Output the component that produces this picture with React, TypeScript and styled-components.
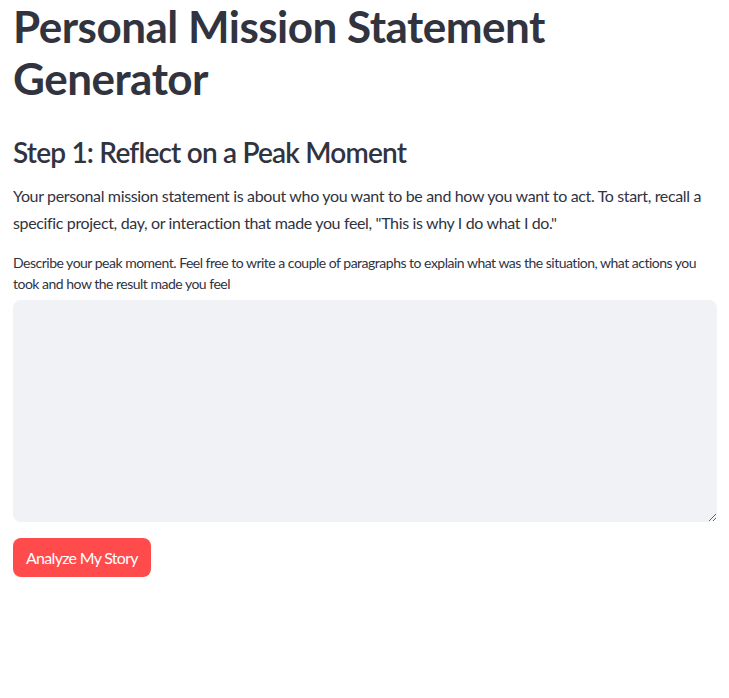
import React from 'react';
import styled, { createGlobalStyle } from 'styled-components';

const GlobalStyle = createGlobalStyle`
  html, body {
    margin: 0;
    padding: 0;
    background: #ffffff;
  }
  body {
    font-family: Lato, "Noto Sans", sans-serif;
    color: #31333f;
  }
`;

const Page = styled.main`
  padding: 0 12px 0 13px;
  display: flex;
  flex-direction: column;
`;

const Title = styled.h1`
  margin: 0;
  padding-top: 0;
  font-size: 44px;
  font-weight: 700;
  line-height: 52px;
  letter-spacing: -0.5px;
`;

const StepHeading = styled.h2`
  margin: 28px 0 0;
  font-size: 28px;
  font-weight: 600;
  line-height: 40px;
  letter-spacing: -0.8px;
`;

const Intro = styled.p`
  margin: 10px 0 0;
  font-size: 16px;
  line-height: 27px;
  letter-spacing: -0.35px;
`;

const Label = styled.label`
  display: block;
  margin-top: 16px;
  font-size: 14px;
  line-height: 21px;
  letter-spacing: -0.5px;
`;

const StoryInput = styled.textarea`
  display: block;
  box-sizing: border-box;
  margin-top: 6px;
  width: 100%;
  height: 222px;
  border: none;
  border-radius: 8px;
  background: #f0f2f6;
  padding: 12px 16px;
  font-family: inherit;
  font-size: 16px;
  color: #31333f;
  resize: vertical;
  outline: none;
`;

const Button = styled.button`
  align-self: flex-start;
  margin-top: 16px;
  height: 39px;
  padding: 0 13px;
  border: none;
  border-radius: 8px;
  background: #ff4b4b;
  color: #ffffff;
  font-family: inherit;
  font-size: 16px;
  line-height: 1;
  letter-spacing: -0.7px;
  cursor: pointer;
`;

export default function App() {
  return (
    <>
      <GlobalStyle />
      <Page>
        <Title>Personal Mission Statement Generator</Title>
        <StepHeading>Step 1: Reflect on a Peak Moment</StepHeading>
        <Intro>
          Your personal mission statement is about who you want to be and how you want to act. To
          start, recall a specific project, day, or interaction that made you feel, "This is why I
          do what I do."
        </Intro>
        <Label htmlFor="story">
          Describe your peak moment. Feel free to write a couple of paragraphs to explain what was
          the situation, what actions you took and how the result made you feel
        </Label>
        <StoryInput id="story" />
        <Button>Analyze My Story</Button>
      </Page>
    </>
  );
}
